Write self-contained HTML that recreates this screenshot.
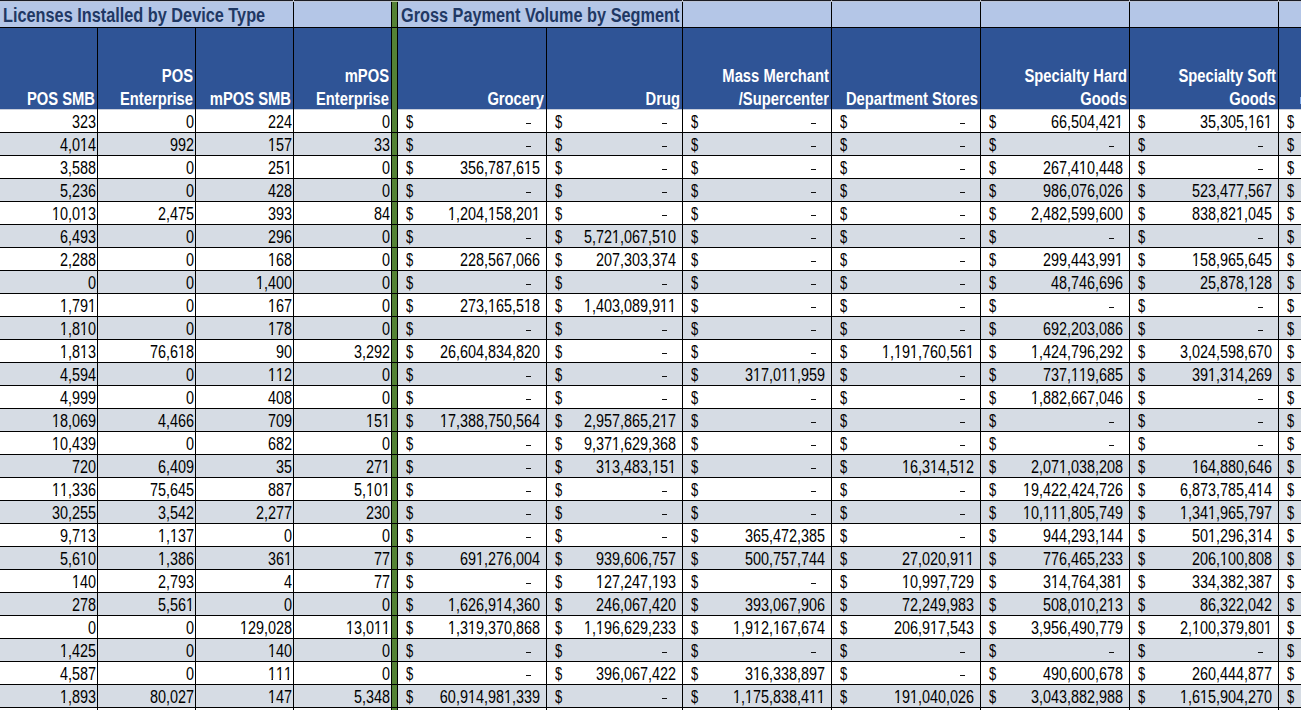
<!DOCTYPE html><html><head><meta charset="utf-8"><style>
html,body{margin:0;padding:0;}body{width:1301px;height:710px;overflow:hidden;position:relative;background:#fff;font-family:"Liberation Sans",sans-serif;}
.b{position:absolute;background:#000;}
.t{position:absolute;white-space:nowrap;line-height:24px;}
.r{text-align:right;transform-origin:100% 50%;}
.l{text-align:left;transform-origin:0 50%;}
.d{font-size:18px;transform:scaleX(0.8);color:#000;}
.h{font-size:18px;font-weight:bold;transform:scaleX(0.82);color:#fff;}
.ti{font-size:19.5px;font-weight:bold;transform:scaleX(0.835);color:#1f3864;}
.one{display:inline-block;clip-path:polygon(0 0,100% 0,100% 15.9px,6.2px 15.9px,6.2px 100%,4.4px 100%,4.4px 15.9px,0 15.9px);}
</style></head><body>
<div style="position:absolute;left:0;top:0;width:1301px;height:28px;background:#b4c6e7"></div>
<div style="position:absolute;left:0;top:28px;width:1301px;height:81px;background:#2f5496"></div>
<div style="position:absolute;left:0;top:109px;width:1301px;height:23px;background:#ffffff"></div>
<div style="position:absolute;left:0;top:132px;width:1301px;height:23px;background:#d6dce4"></div>
<div style="position:absolute;left:0;top:155px;width:1301px;height:23px;background:#ffffff"></div>
<div style="position:absolute;left:0;top:178px;width:1301px;height:23px;background:#d6dce4"></div>
<div style="position:absolute;left:0;top:201px;width:1301px;height:23px;background:#ffffff"></div>
<div style="position:absolute;left:0;top:224px;width:1301px;height:23px;background:#d6dce4"></div>
<div style="position:absolute;left:0;top:247px;width:1301px;height:23px;background:#ffffff"></div>
<div style="position:absolute;left:0;top:270px;width:1301px;height:23px;background:#d6dce4"></div>
<div style="position:absolute;left:0;top:293px;width:1301px;height:23px;background:#ffffff"></div>
<div style="position:absolute;left:0;top:316px;width:1301px;height:23px;background:#d6dce4"></div>
<div style="position:absolute;left:0;top:339px;width:1301px;height:23px;background:#ffffff"></div>
<div style="position:absolute;left:0;top:362px;width:1301px;height:23px;background:#d6dce4"></div>
<div style="position:absolute;left:0;top:385px;width:1301px;height:23px;background:#ffffff"></div>
<div style="position:absolute;left:0;top:408px;width:1301px;height:23px;background:#d6dce4"></div>
<div style="position:absolute;left:0;top:431px;width:1301px;height:23px;background:#ffffff"></div>
<div style="position:absolute;left:0;top:454px;width:1301px;height:23px;background:#d6dce4"></div>
<div style="position:absolute;left:0;top:477px;width:1301px;height:23px;background:#ffffff"></div>
<div style="position:absolute;left:0;top:500px;width:1301px;height:23px;background:#d6dce4"></div>
<div style="position:absolute;left:0;top:523px;width:1301px;height:23px;background:#ffffff"></div>
<div style="position:absolute;left:0;top:546px;width:1301px;height:23px;background:#d6dce4"></div>
<div style="position:absolute;left:0;top:569px;width:1301px;height:23px;background:#ffffff"></div>
<div style="position:absolute;left:0;top:592px;width:1301px;height:23px;background:#d6dce4"></div>
<div style="position:absolute;left:0;top:615px;width:1301px;height:23px;background:#ffffff"></div>
<div style="position:absolute;left:0;top:638px;width:1301px;height:23px;background:#d6dce4"></div>
<div style="position:absolute;left:0;top:661px;width:1301px;height:23px;background:#ffffff"></div>
<div style="position:absolute;left:0;top:684px;width:1301px;height:23px;background:#d6dce4"></div>
<div style="position:absolute;left:0;top:109px;width:1301px;height:1px;background:#c8cedb"></div>
<div style="position:absolute;left:392px;top:0;width:5px;height:710px;background:#548235"></div>
<div class="b" style="left:0;top:0;width:1301px;height:1px;background:#1a1b24"></div>
<div style="position:absolute;left:0;top:1px;width:1301px;height:1px;background:#bcc4d6"></div>
<div class="b" style="left:0;top:27px;width:1301px;height:1px"></div>
<div class="b" style="left:0;top:132px;width:1301px;height:1px"></div>
<div class="b" style="left:0;top:155px;width:1301px;height:1px"></div>
<div class="b" style="left:0;top:178px;width:1301px;height:1px"></div>
<div class="b" style="left:0;top:201px;width:1301px;height:1px"></div>
<div class="b" style="left:0;top:224px;width:1301px;height:1px"></div>
<div class="b" style="left:0;top:247px;width:1301px;height:1px"></div>
<div class="b" style="left:0;top:270px;width:1301px;height:1px"></div>
<div class="b" style="left:0;top:293px;width:1301px;height:1px"></div>
<div class="b" style="left:0;top:316px;width:1301px;height:1px"></div>
<div class="b" style="left:0;top:339px;width:1301px;height:1px"></div>
<div class="b" style="left:0;top:362px;width:1301px;height:1px"></div>
<div class="b" style="left:0;top:385px;width:1301px;height:1px"></div>
<div class="b" style="left:0;top:408px;width:1301px;height:1px"></div>
<div class="b" style="left:0;top:431px;width:1301px;height:1px"></div>
<div class="b" style="left:0;top:454px;width:1301px;height:1px"></div>
<div class="b" style="left:0;top:477px;width:1301px;height:1px"></div>
<div class="b" style="left:0;top:500px;width:1301px;height:1px"></div>
<div class="b" style="left:0;top:523px;width:1301px;height:1px"></div>
<div class="b" style="left:0;top:546px;width:1301px;height:1px"></div>
<div class="b" style="left:0;top:569px;width:1301px;height:1px"></div>
<div class="b" style="left:0;top:592px;width:1301px;height:1px"></div>
<div class="b" style="left:0;top:615px;width:1301px;height:1px"></div>
<div class="b" style="left:0;top:638px;width:1301px;height:1px"></div>
<div class="b" style="left:0;top:661px;width:1301px;height:1px"></div>
<div class="b" style="left:0;top:684px;width:1301px;height:1px"></div>
<div class="b" style="left:0;top:707px;width:1301px;height:1px"></div>
<div class="b" style="left:97px;top:28px;width:1px;height:682px"></div>
<div class="b" style="left:195px;top:28px;width:1px;height:682px"></div>
<div class="b" style="left:546px;top:28px;width:1px;height:682px"></div>
<div class="b" style="left:293px;top:2px;width:1px;height:708px"></div>
<div class="b" style="left:391px;top:2px;width:1px;height:708px"></div>
<div class="b" style="left:397px;top:2px;width:1px;height:708px"></div>
<div class="b" style="left:682px;top:2px;width:1px;height:708px"></div>
<div class="b" style="left:831px;top:2px;width:1px;height:708px"></div>
<div class="b" style="left:980px;top:2px;width:1px;height:708px"></div>
<div class="b" style="left:1129px;top:2px;width:1px;height:708px"></div>
<div class="b" style="left:1278px;top:2px;width:1px;height:708px"></div>
<div style="position:absolute;left:293px;top:0;width:1px;height:2px;background:#b8bcc4"></div>
<div style="position:absolute;left:682px;top:0;width:1px;height:2px;background:#b8bcc4"></div>
<div style="position:absolute;left:831px;top:0;width:1px;height:2px;background:#b8bcc4"></div>
<div style="position:absolute;left:980px;top:0;width:1px;height:2px;background:#b8bcc4"></div>
<div style="position:absolute;left:1129px;top:0;width:1px;height:2px;background:#b8bcc4"></div>
<div style="position:absolute;left:1278px;top:0;width:1px;height:2px;background:#b8bcc4"></div>
<div style="position:absolute;left:391px;top:0;width:7px;height:1px;background:#2a3418"></div>
<div style="position:absolute;left:391px;top:1px;width:7px;height:1px;background:#b4c49c"></div>
<div style="position:absolute;left:391px;top:708px;width:1px;height:2px;background:#000"></div>
<div style="position:absolute;left:397px;top:708px;width:1px;height:2px;background:#000"></div>
<div class="t l ti" style="left:3px;top:3px;width:300px">Licenses Installed by Device Type</div>
<div class="t l ti" style="left:401px;top:3px;width:300px">Gross Payment Volume by Segment</div>
<div class="t r h" style="left:-205px;top:87px;width:300px">POS SMB</div>
<div class="t r h" style="left:-107px;top:64px;width:300px">POS</div>
<div class="t r h" style="left:-107px;top:87px;width:300px">Enterprise</div>
<div class="t r h" style="left:-9px;top:87px;width:300px">mPOS SMB</div>
<div class="t r h" style="left:89px;top:64px;width:300px">mPOS</div>
<div class="t r h" style="left:89px;top:87px;width:300px">Enterprise</div>
<div class="t r h" style="left:244px;top:87px;width:300px">Grocery</div>
<div class="t r h" style="left:380px;top:87px;width:300px">Drug</div>
<div class="t r h" style="left:529px;top:64px;width:300px">Mass Merchant</div>
<div class="t r h" style="left:529px;top:87px;width:300px">/Supercenter</div>
<div class="t r h" style="left:678px;top:87px;width:300px">Department Stores</div>
<div class="t r h" style="left:827px;top:64px;width:300px">Specialty Hard</div>
<div class="t r h" style="left:827px;top:87px;width:300px">Goods</div>
<div class="t r h" style="left:976px;top:64px;width:300px">Specialty Soft</div>
<div class="t r h" style="left:976px;top:87px;width:300px">Goods</div>
<div class="t r d s0" style="left:-24px;top:110px;width:120px">323</div>
<div class="t r d s0" style="left:74px;top:110px;width:120px">0</div>
<div class="t r d s0" style="left:172px;top:110px;width:120px">224</div>
<div class="t r d s0" style="left:270px;top:110px;width:120px">0</div>
<div class="t l d s0" style="left:405.5px;top:110px;width:20px;transform:scaleX(0.72)">$</div>
<div style="position:absolute;left:526px;top:123px;width:5px;height:1px;background:#111"></div>
<div class="t l d s0" style="left:554.5px;top:110px;width:20px;transform:scaleX(0.72)">$</div>
<div style="position:absolute;left:662px;top:123px;width:5px;height:1px;background:#111"></div>
<div class="t l d s0" style="left:690.5px;top:110px;width:20px;transform:scaleX(0.72)">$</div>
<div style="position:absolute;left:811px;top:123px;width:5px;height:1px;background:#111"></div>
<div class="t l d s0" style="left:839.5px;top:110px;width:20px;transform:scaleX(0.72)">$</div>
<div style="position:absolute;left:960px;top:123px;width:5px;height:1px;background:#111"></div>
<div class="t l d s0" style="left:988.5px;top:110px;width:20px;transform:scaleX(0.72)">$</div>
<div class="t r d s0" style="left:983px;top:110px;width:140px">66,504,42<span class="one">1</span></div>
<div class="t l d s0" style="left:1137.5px;top:110px;width:20px;transform:scaleX(0.72)">$</div>
<div class="t r d s0" style="left:1132px;top:110px;width:140px">35,305,<span class="one">1</span>6<span class="one">1</span></div>
<div class="t l d s0" style="left:1286.5px;top:110px;width:20px;transform:scaleX(0.72)">$</div>
<div class="t r d s1" style="left:-24px;top:133px;width:120px">4,0<span class="one">1</span>4</div>
<div class="t r d s1" style="left:74px;top:133px;width:120px">992</div>
<div class="t r d s1" style="left:172px;top:133px;width:120px"><span class="one">1</span>57</div>
<div class="t r d s1" style="left:270px;top:133px;width:120px">33</div>
<div class="t l d s1" style="left:405.5px;top:133px;width:20px;transform:scaleX(0.72)">$</div>
<div style="position:absolute;left:526px;top:146px;width:5px;height:1px;background:#111"></div>
<div class="t l d s1" style="left:554.5px;top:133px;width:20px;transform:scaleX(0.72)">$</div>
<div style="position:absolute;left:662px;top:146px;width:5px;height:1px;background:#111"></div>
<div class="t l d s1" style="left:690.5px;top:133px;width:20px;transform:scaleX(0.72)">$</div>
<div style="position:absolute;left:811px;top:146px;width:5px;height:1px;background:#111"></div>
<div class="t l d s1" style="left:839.5px;top:133px;width:20px;transform:scaleX(0.72)">$</div>
<div style="position:absolute;left:960px;top:146px;width:5px;height:1px;background:#111"></div>
<div class="t l d s1" style="left:988.5px;top:133px;width:20px;transform:scaleX(0.72)">$</div>
<div style="position:absolute;left:1109px;top:146px;width:5px;height:1px;background:#111"></div>
<div class="t l d s1" style="left:1137.5px;top:133px;width:20px;transform:scaleX(0.72)">$</div>
<div style="position:absolute;left:1258px;top:146px;width:5px;height:1px;background:#111"></div>
<div class="t l d s1" style="left:1286.5px;top:133px;width:20px;transform:scaleX(0.72)">$</div>
<div class="t r d s0" style="left:-24px;top:156px;width:120px">3,588</div>
<div class="t r d s0" style="left:74px;top:156px;width:120px">0</div>
<div class="t r d s0" style="left:172px;top:156px;width:120px">25<span class="one">1</span></div>
<div class="t r d s0" style="left:270px;top:156px;width:120px">0</div>
<div class="t l d s0" style="left:405.5px;top:156px;width:20px;transform:scaleX(0.72)">$</div>
<div class="t r d s0" style="left:400px;top:156px;width:140px">356,787,6<span class="one">1</span>5</div>
<div class="t l d s0" style="left:554.5px;top:156px;width:20px;transform:scaleX(0.72)">$</div>
<div style="position:absolute;left:662px;top:169px;width:5px;height:1px;background:#111"></div>
<div class="t l d s0" style="left:690.5px;top:156px;width:20px;transform:scaleX(0.72)">$</div>
<div style="position:absolute;left:811px;top:169px;width:5px;height:1px;background:#111"></div>
<div class="t l d s0" style="left:839.5px;top:156px;width:20px;transform:scaleX(0.72)">$</div>
<div style="position:absolute;left:960px;top:169px;width:5px;height:1px;background:#111"></div>
<div class="t l d s0" style="left:988.5px;top:156px;width:20px;transform:scaleX(0.72)">$</div>
<div class="t r d s0" style="left:983px;top:156px;width:140px">267,4<span class="one">1</span>0,448</div>
<div class="t l d s0" style="left:1137.5px;top:156px;width:20px;transform:scaleX(0.72)">$</div>
<div style="position:absolute;left:1258px;top:169px;width:5px;height:1px;background:#111"></div>
<div class="t l d s0" style="left:1286.5px;top:156px;width:20px;transform:scaleX(0.72)">$</div>
<div class="t r d s1" style="left:-24px;top:179px;width:120px">5,236</div>
<div class="t r d s1" style="left:74px;top:179px;width:120px">0</div>
<div class="t r d s1" style="left:172px;top:179px;width:120px">428</div>
<div class="t r d s1" style="left:270px;top:179px;width:120px">0</div>
<div class="t l d s1" style="left:405.5px;top:179px;width:20px;transform:scaleX(0.72)">$</div>
<div style="position:absolute;left:526px;top:192px;width:5px;height:1px;background:#111"></div>
<div class="t l d s1" style="left:554.5px;top:179px;width:20px;transform:scaleX(0.72)">$</div>
<div style="position:absolute;left:662px;top:192px;width:5px;height:1px;background:#111"></div>
<div class="t l d s1" style="left:690.5px;top:179px;width:20px;transform:scaleX(0.72)">$</div>
<div style="position:absolute;left:811px;top:192px;width:5px;height:1px;background:#111"></div>
<div class="t l d s1" style="left:839.5px;top:179px;width:20px;transform:scaleX(0.72)">$</div>
<div style="position:absolute;left:960px;top:192px;width:5px;height:1px;background:#111"></div>
<div class="t l d s1" style="left:988.5px;top:179px;width:20px;transform:scaleX(0.72)">$</div>
<div class="t r d s1" style="left:983px;top:179px;width:140px">986,076,026</div>
<div class="t l d s1" style="left:1137.5px;top:179px;width:20px;transform:scaleX(0.72)">$</div>
<div class="t r d s1" style="left:1132px;top:179px;width:140px">523,477,567</div>
<div class="t l d s1" style="left:1286.5px;top:179px;width:20px;transform:scaleX(0.72)">$</div>
<div class="t r d s0" style="left:-24px;top:202px;width:120px"><span class="one">1</span>0,0<span class="one">1</span>3</div>
<div class="t r d s0" style="left:74px;top:202px;width:120px">2,475</div>
<div class="t r d s0" style="left:172px;top:202px;width:120px">393</div>
<div class="t r d s0" style="left:270px;top:202px;width:120px">84</div>
<div class="t l d s0" style="left:405.5px;top:202px;width:20px;transform:scaleX(0.72)">$</div>
<div class="t r d s0" style="left:400px;top:202px;width:140px"><span class="one">1</span>,204,<span class="one">1</span>58,20<span class="one">1</span></div>
<div class="t l d s0" style="left:554.5px;top:202px;width:20px;transform:scaleX(0.72)">$</div>
<div style="position:absolute;left:662px;top:215px;width:5px;height:1px;background:#111"></div>
<div class="t l d s0" style="left:690.5px;top:202px;width:20px;transform:scaleX(0.72)">$</div>
<div style="position:absolute;left:811px;top:215px;width:5px;height:1px;background:#111"></div>
<div class="t l d s0" style="left:839.5px;top:202px;width:20px;transform:scaleX(0.72)">$</div>
<div style="position:absolute;left:960px;top:215px;width:5px;height:1px;background:#111"></div>
<div class="t l d s0" style="left:988.5px;top:202px;width:20px;transform:scaleX(0.72)">$</div>
<div class="t r d s0" style="left:983px;top:202px;width:140px">2,482,599,600</div>
<div class="t l d s0" style="left:1137.5px;top:202px;width:20px;transform:scaleX(0.72)">$</div>
<div class="t r d s0" style="left:1132px;top:202px;width:140px">838,82<span class="one">1</span>,045</div>
<div class="t l d s0" style="left:1286.5px;top:202px;width:20px;transform:scaleX(0.72)">$</div>
<div class="t r d s1" style="left:-24px;top:225px;width:120px">6,493</div>
<div class="t r d s1" style="left:74px;top:225px;width:120px">0</div>
<div class="t r d s1" style="left:172px;top:225px;width:120px">296</div>
<div class="t r d s1" style="left:270px;top:225px;width:120px">0</div>
<div class="t l d s1" style="left:405.5px;top:225px;width:20px;transform:scaleX(0.72)">$</div>
<div style="position:absolute;left:526px;top:238px;width:5px;height:1px;background:#111"></div>
<div class="t l d s1" style="left:554.5px;top:225px;width:20px;transform:scaleX(0.72)">$</div>
<div class="t r d s1" style="left:536px;top:225px;width:140px">5,72<span class="one">1</span>,067,5<span class="one">1</span>0</div>
<div class="t l d s1" style="left:690.5px;top:225px;width:20px;transform:scaleX(0.72)">$</div>
<div style="position:absolute;left:811px;top:238px;width:5px;height:1px;background:#111"></div>
<div class="t l d s1" style="left:839.5px;top:225px;width:20px;transform:scaleX(0.72)">$</div>
<div style="position:absolute;left:960px;top:238px;width:5px;height:1px;background:#111"></div>
<div class="t l d s1" style="left:988.5px;top:225px;width:20px;transform:scaleX(0.72)">$</div>
<div style="position:absolute;left:1109px;top:238px;width:5px;height:1px;background:#111"></div>
<div class="t l d s1" style="left:1137.5px;top:225px;width:20px;transform:scaleX(0.72)">$</div>
<div style="position:absolute;left:1258px;top:238px;width:5px;height:1px;background:#111"></div>
<div class="t l d s1" style="left:1286.5px;top:225px;width:20px;transform:scaleX(0.72)">$</div>
<div class="t r d s0" style="left:-24px;top:248px;width:120px">2,288</div>
<div class="t r d s0" style="left:74px;top:248px;width:120px">0</div>
<div class="t r d s0" style="left:172px;top:248px;width:120px"><span class="one">1</span>68</div>
<div class="t r d s0" style="left:270px;top:248px;width:120px">0</div>
<div class="t l d s0" style="left:405.5px;top:248px;width:20px;transform:scaleX(0.72)">$</div>
<div class="t r d s0" style="left:400px;top:248px;width:140px">228,567,066</div>
<div class="t l d s0" style="left:554.5px;top:248px;width:20px;transform:scaleX(0.72)">$</div>
<div class="t r d s0" style="left:536px;top:248px;width:140px">207,303,374</div>
<div class="t l d s0" style="left:690.5px;top:248px;width:20px;transform:scaleX(0.72)">$</div>
<div style="position:absolute;left:811px;top:261px;width:5px;height:1px;background:#111"></div>
<div class="t l d s0" style="left:839.5px;top:248px;width:20px;transform:scaleX(0.72)">$</div>
<div style="position:absolute;left:960px;top:261px;width:5px;height:1px;background:#111"></div>
<div class="t l d s0" style="left:988.5px;top:248px;width:20px;transform:scaleX(0.72)">$</div>
<div class="t r d s0" style="left:983px;top:248px;width:140px">299,443,99<span class="one">1</span></div>
<div class="t l d s0" style="left:1137.5px;top:248px;width:20px;transform:scaleX(0.72)">$</div>
<div class="t r d s0" style="left:1132px;top:248px;width:140px"><span class="one">1</span>58,965,645</div>
<div class="t l d s0" style="left:1286.5px;top:248px;width:20px;transform:scaleX(0.72)">$</div>
<div class="t r d s1" style="left:-24px;top:271px;width:120px">0</div>
<div class="t r d s1" style="left:74px;top:271px;width:120px">0</div>
<div class="t r d s1" style="left:172px;top:271px;width:120px"><span class="one">1</span>,400</div>
<div class="t r d s1" style="left:270px;top:271px;width:120px">0</div>
<div class="t l d s1" style="left:405.5px;top:271px;width:20px;transform:scaleX(0.72)">$</div>
<div style="position:absolute;left:526px;top:284px;width:5px;height:1px;background:#111"></div>
<div class="t l d s1" style="left:554.5px;top:271px;width:20px;transform:scaleX(0.72)">$</div>
<div style="position:absolute;left:662px;top:284px;width:5px;height:1px;background:#111"></div>
<div class="t l d s1" style="left:690.5px;top:271px;width:20px;transform:scaleX(0.72)">$</div>
<div style="position:absolute;left:811px;top:284px;width:5px;height:1px;background:#111"></div>
<div class="t l d s1" style="left:839.5px;top:271px;width:20px;transform:scaleX(0.72)">$</div>
<div style="position:absolute;left:960px;top:284px;width:5px;height:1px;background:#111"></div>
<div class="t l d s1" style="left:988.5px;top:271px;width:20px;transform:scaleX(0.72)">$</div>
<div class="t r d s1" style="left:983px;top:271px;width:140px">48,746,696</div>
<div class="t l d s1" style="left:1137.5px;top:271px;width:20px;transform:scaleX(0.72)">$</div>
<div class="t r d s1" style="left:1132px;top:271px;width:140px">25,878,<span class="one">1</span>28</div>
<div class="t l d s1" style="left:1286.5px;top:271px;width:20px;transform:scaleX(0.72)">$</div>
<div class="t r d s0" style="left:-24px;top:294px;width:120px"><span class="one">1</span>,79<span class="one">1</span></div>
<div class="t r d s0" style="left:74px;top:294px;width:120px">0</div>
<div class="t r d s0" style="left:172px;top:294px;width:120px"><span class="one">1</span>67</div>
<div class="t r d s0" style="left:270px;top:294px;width:120px">0</div>
<div class="t l d s0" style="left:405.5px;top:294px;width:20px;transform:scaleX(0.72)">$</div>
<div class="t r d s0" style="left:400px;top:294px;width:140px">273,<span class="one">1</span>65,5<span class="one">1</span>8</div>
<div class="t l d s0" style="left:554.5px;top:294px;width:20px;transform:scaleX(0.72)">$</div>
<div class="t r d s0" style="left:536px;top:294px;width:140px"><span class="one">1</span>,403,089,9<span class="one">1</span><span class="one">1</span></div>
<div class="t l d s0" style="left:690.5px;top:294px;width:20px;transform:scaleX(0.72)">$</div>
<div style="position:absolute;left:811px;top:307px;width:5px;height:1px;background:#111"></div>
<div class="t l d s0" style="left:839.5px;top:294px;width:20px;transform:scaleX(0.72)">$</div>
<div style="position:absolute;left:960px;top:307px;width:5px;height:1px;background:#111"></div>
<div class="t l d s0" style="left:988.5px;top:294px;width:20px;transform:scaleX(0.72)">$</div>
<div style="position:absolute;left:1109px;top:307px;width:5px;height:1px;background:#111"></div>
<div class="t l d s0" style="left:1137.5px;top:294px;width:20px;transform:scaleX(0.72)">$</div>
<div style="position:absolute;left:1258px;top:307px;width:5px;height:1px;background:#111"></div>
<div class="t l d s0" style="left:1286.5px;top:294px;width:20px;transform:scaleX(0.72)">$</div>
<div class="t r d s1" style="left:-24px;top:317px;width:120px"><span class="one">1</span>,8<span class="one">1</span>0</div>
<div class="t r d s1" style="left:74px;top:317px;width:120px">0</div>
<div class="t r d s1" style="left:172px;top:317px;width:120px"><span class="one">1</span>78</div>
<div class="t r d s1" style="left:270px;top:317px;width:120px">0</div>
<div class="t l d s1" style="left:405.5px;top:317px;width:20px;transform:scaleX(0.72)">$</div>
<div style="position:absolute;left:526px;top:330px;width:5px;height:1px;background:#111"></div>
<div class="t l d s1" style="left:554.5px;top:317px;width:20px;transform:scaleX(0.72)">$</div>
<div style="position:absolute;left:662px;top:330px;width:5px;height:1px;background:#111"></div>
<div class="t l d s1" style="left:690.5px;top:317px;width:20px;transform:scaleX(0.72)">$</div>
<div style="position:absolute;left:811px;top:330px;width:5px;height:1px;background:#111"></div>
<div class="t l d s1" style="left:839.5px;top:317px;width:20px;transform:scaleX(0.72)">$</div>
<div style="position:absolute;left:960px;top:330px;width:5px;height:1px;background:#111"></div>
<div class="t l d s1" style="left:988.5px;top:317px;width:20px;transform:scaleX(0.72)">$</div>
<div class="t r d s1" style="left:983px;top:317px;width:140px">692,203,086</div>
<div class="t l d s1" style="left:1137.5px;top:317px;width:20px;transform:scaleX(0.72)">$</div>
<div style="position:absolute;left:1258px;top:330px;width:5px;height:1px;background:#111"></div>
<div class="t l d s1" style="left:1286.5px;top:317px;width:20px;transform:scaleX(0.72)">$</div>
<div class="t r d s0" style="left:-24px;top:340px;width:120px"><span class="one">1</span>,8<span class="one">1</span>3</div>
<div class="t r d s0" style="left:74px;top:340px;width:120px">76,6<span class="one">1</span>8</div>
<div class="t r d s0" style="left:172px;top:340px;width:120px">90</div>
<div class="t r d s0" style="left:270px;top:340px;width:120px">3,292</div>
<div class="t l d s0" style="left:405.5px;top:340px;width:20px;transform:scaleX(0.72)">$</div>
<div class="t r d s0" style="left:400px;top:340px;width:140px">26,604,834,820</div>
<div class="t l d s0" style="left:554.5px;top:340px;width:20px;transform:scaleX(0.72)">$</div>
<div style="position:absolute;left:662px;top:353px;width:5px;height:1px;background:#111"></div>
<div class="t l d s0" style="left:690.5px;top:340px;width:20px;transform:scaleX(0.72)">$</div>
<div style="position:absolute;left:811px;top:353px;width:5px;height:1px;background:#111"></div>
<div class="t l d s0" style="left:839.5px;top:340px;width:20px;transform:scaleX(0.72)">$</div>
<div class="t r d s0" style="left:834px;top:340px;width:140px"><span class="one">1</span>,<span class="one">1</span>9<span class="one">1</span>,760,56<span class="one">1</span></div>
<div class="t l d s0" style="left:988.5px;top:340px;width:20px;transform:scaleX(0.72)">$</div>
<div class="t r d s0" style="left:983px;top:340px;width:140px"><span class="one">1</span>,424,796,292</div>
<div class="t l d s0" style="left:1137.5px;top:340px;width:20px;transform:scaleX(0.72)">$</div>
<div class="t r d s0" style="left:1132px;top:340px;width:140px">3,024,598,670</div>
<div class="t l d s0" style="left:1286.5px;top:340px;width:20px;transform:scaleX(0.72)">$</div>
<div class="t r d s1" style="left:-24px;top:363px;width:120px">4,594</div>
<div class="t r d s1" style="left:74px;top:363px;width:120px">0</div>
<div class="t r d s1" style="left:172px;top:363px;width:120px"><span class="one">1</span><span class="one">1</span>2</div>
<div class="t r d s1" style="left:270px;top:363px;width:120px">0</div>
<div class="t l d s1" style="left:405.5px;top:363px;width:20px;transform:scaleX(0.72)">$</div>
<div style="position:absolute;left:526px;top:376px;width:5px;height:1px;background:#111"></div>
<div class="t l d s1" style="left:554.5px;top:363px;width:20px;transform:scaleX(0.72)">$</div>
<div style="position:absolute;left:662px;top:376px;width:5px;height:1px;background:#111"></div>
<div class="t l d s1" style="left:690.5px;top:363px;width:20px;transform:scaleX(0.72)">$</div>
<div class="t r d s1" style="left:685px;top:363px;width:140px">3<span class="one">1</span>7,0<span class="one">1</span><span class="one">1</span>,959</div>
<div class="t l d s1" style="left:839.5px;top:363px;width:20px;transform:scaleX(0.72)">$</div>
<div style="position:absolute;left:960px;top:376px;width:5px;height:1px;background:#111"></div>
<div class="t l d s1" style="left:988.5px;top:363px;width:20px;transform:scaleX(0.72)">$</div>
<div class="t r d s1" style="left:983px;top:363px;width:140px">737,<span class="one">1</span><span class="one">1</span>9,685</div>
<div class="t l d s1" style="left:1137.5px;top:363px;width:20px;transform:scaleX(0.72)">$</div>
<div class="t r d s1" style="left:1132px;top:363px;width:140px">39<span class="one">1</span>,3<span class="one">1</span>4,269</div>
<div class="t l d s1" style="left:1286.5px;top:363px;width:20px;transform:scaleX(0.72)">$</div>
<div class="t r d s0" style="left:-24px;top:386px;width:120px">4,999</div>
<div class="t r d s0" style="left:74px;top:386px;width:120px">0</div>
<div class="t r d s0" style="left:172px;top:386px;width:120px">408</div>
<div class="t r d s0" style="left:270px;top:386px;width:120px">0</div>
<div class="t l d s0" style="left:405.5px;top:386px;width:20px;transform:scaleX(0.72)">$</div>
<div style="position:absolute;left:526px;top:399px;width:5px;height:1px;background:#111"></div>
<div class="t l d s0" style="left:554.5px;top:386px;width:20px;transform:scaleX(0.72)">$</div>
<div style="position:absolute;left:662px;top:399px;width:5px;height:1px;background:#111"></div>
<div class="t l d s0" style="left:690.5px;top:386px;width:20px;transform:scaleX(0.72)">$</div>
<div style="position:absolute;left:811px;top:399px;width:5px;height:1px;background:#111"></div>
<div class="t l d s0" style="left:839.5px;top:386px;width:20px;transform:scaleX(0.72)">$</div>
<div style="position:absolute;left:960px;top:399px;width:5px;height:1px;background:#111"></div>
<div class="t l d s0" style="left:988.5px;top:386px;width:20px;transform:scaleX(0.72)">$</div>
<div class="t r d s0" style="left:983px;top:386px;width:140px"><span class="one">1</span>,882,667,046</div>
<div class="t l d s0" style="left:1137.5px;top:386px;width:20px;transform:scaleX(0.72)">$</div>
<div style="position:absolute;left:1258px;top:399px;width:5px;height:1px;background:#111"></div>
<div class="t l d s0" style="left:1286.5px;top:386px;width:20px;transform:scaleX(0.72)">$</div>
<div class="t r d s1" style="left:-24px;top:409px;width:120px"><span class="one">1</span>8,069</div>
<div class="t r d s1" style="left:74px;top:409px;width:120px">4,466</div>
<div class="t r d s1" style="left:172px;top:409px;width:120px">709</div>
<div class="t r d s1" style="left:270px;top:409px;width:120px"><span class="one">1</span>5<span class="one">1</span></div>
<div class="t l d s1" style="left:405.5px;top:409px;width:20px;transform:scaleX(0.72)">$</div>
<div class="t r d s1" style="left:400px;top:409px;width:140px"><span class="one">1</span>7,388,750,564</div>
<div class="t l d s1" style="left:554.5px;top:409px;width:20px;transform:scaleX(0.72)">$</div>
<div class="t r d s1" style="left:536px;top:409px;width:140px">2,957,865,2<span class="one">1</span>7</div>
<div class="t l d s1" style="left:690.5px;top:409px;width:20px;transform:scaleX(0.72)">$</div>
<div style="position:absolute;left:811px;top:422px;width:5px;height:1px;background:#111"></div>
<div class="t l d s1" style="left:839.5px;top:409px;width:20px;transform:scaleX(0.72)">$</div>
<div style="position:absolute;left:960px;top:422px;width:5px;height:1px;background:#111"></div>
<div class="t l d s1" style="left:988.5px;top:409px;width:20px;transform:scaleX(0.72)">$</div>
<div style="position:absolute;left:1109px;top:422px;width:5px;height:1px;background:#111"></div>
<div class="t l d s1" style="left:1137.5px;top:409px;width:20px;transform:scaleX(0.72)">$</div>
<div style="position:absolute;left:1258px;top:422px;width:5px;height:1px;background:#111"></div>
<div class="t l d s1" style="left:1286.5px;top:409px;width:20px;transform:scaleX(0.72)">$</div>
<div class="t r d s0" style="left:-24px;top:432px;width:120px"><span class="one">1</span>0,439</div>
<div class="t r d s0" style="left:74px;top:432px;width:120px">0</div>
<div class="t r d s0" style="left:172px;top:432px;width:120px">682</div>
<div class="t r d s0" style="left:270px;top:432px;width:120px">0</div>
<div class="t l d s0" style="left:405.5px;top:432px;width:20px;transform:scaleX(0.72)">$</div>
<div style="position:absolute;left:526px;top:445px;width:5px;height:1px;background:#111"></div>
<div class="t l d s0" style="left:554.5px;top:432px;width:20px;transform:scaleX(0.72)">$</div>
<div class="t r d s0" style="left:536px;top:432px;width:140px">9,37<span class="one">1</span>,629,368</div>
<div class="t l d s0" style="left:690.5px;top:432px;width:20px;transform:scaleX(0.72)">$</div>
<div style="position:absolute;left:811px;top:445px;width:5px;height:1px;background:#111"></div>
<div class="t l d s0" style="left:839.5px;top:432px;width:20px;transform:scaleX(0.72)">$</div>
<div style="position:absolute;left:960px;top:445px;width:5px;height:1px;background:#111"></div>
<div class="t l d s0" style="left:988.5px;top:432px;width:20px;transform:scaleX(0.72)">$</div>
<div style="position:absolute;left:1109px;top:445px;width:5px;height:1px;background:#111"></div>
<div class="t l d s0" style="left:1137.5px;top:432px;width:20px;transform:scaleX(0.72)">$</div>
<div style="position:absolute;left:1258px;top:445px;width:5px;height:1px;background:#111"></div>
<div class="t l d s0" style="left:1286.5px;top:432px;width:20px;transform:scaleX(0.72)">$</div>
<div class="t r d s1" style="left:-24px;top:455px;width:120px">720</div>
<div class="t r d s1" style="left:74px;top:455px;width:120px">6,409</div>
<div class="t r d s1" style="left:172px;top:455px;width:120px">35</div>
<div class="t r d s1" style="left:270px;top:455px;width:120px">27<span class="one">1</span></div>
<div class="t l d s1" style="left:405.5px;top:455px;width:20px;transform:scaleX(0.72)">$</div>
<div style="position:absolute;left:526px;top:468px;width:5px;height:1px;background:#111"></div>
<div class="t l d s1" style="left:554.5px;top:455px;width:20px;transform:scaleX(0.72)">$</div>
<div class="t r d s1" style="left:536px;top:455px;width:140px">3<span class="one">1</span>3,483,<span class="one">1</span>5<span class="one">1</span></div>
<div class="t l d s1" style="left:690.5px;top:455px;width:20px;transform:scaleX(0.72)">$</div>
<div style="position:absolute;left:811px;top:468px;width:5px;height:1px;background:#111"></div>
<div class="t l d s1" style="left:839.5px;top:455px;width:20px;transform:scaleX(0.72)">$</div>
<div class="t r d s1" style="left:834px;top:455px;width:140px"><span class="one">1</span>6,3<span class="one">1</span>4,5<span class="one">1</span>2</div>
<div class="t l d s1" style="left:988.5px;top:455px;width:20px;transform:scaleX(0.72)">$</div>
<div class="t r d s1" style="left:983px;top:455px;width:140px">2,07<span class="one">1</span>,038,208</div>
<div class="t l d s1" style="left:1137.5px;top:455px;width:20px;transform:scaleX(0.72)">$</div>
<div class="t r d s1" style="left:1132px;top:455px;width:140px"><span class="one">1</span>64,880,646</div>
<div class="t l d s1" style="left:1286.5px;top:455px;width:20px;transform:scaleX(0.72)">$</div>
<div class="t r d s0" style="left:-24px;top:478px;width:120px"><span class="one">1</span><span class="one">1</span>,336</div>
<div class="t r d s0" style="left:74px;top:478px;width:120px">75,645</div>
<div class="t r d s0" style="left:172px;top:478px;width:120px">887</div>
<div class="t r d s0" style="left:270px;top:478px;width:120px">5,<span class="one">1</span>0<span class="one">1</span></div>
<div class="t l d s0" style="left:405.5px;top:478px;width:20px;transform:scaleX(0.72)">$</div>
<div style="position:absolute;left:526px;top:491px;width:5px;height:1px;background:#111"></div>
<div class="t l d s0" style="left:554.5px;top:478px;width:20px;transform:scaleX(0.72)">$</div>
<div style="position:absolute;left:662px;top:491px;width:5px;height:1px;background:#111"></div>
<div class="t l d s0" style="left:690.5px;top:478px;width:20px;transform:scaleX(0.72)">$</div>
<div style="position:absolute;left:811px;top:491px;width:5px;height:1px;background:#111"></div>
<div class="t l d s0" style="left:839.5px;top:478px;width:20px;transform:scaleX(0.72)">$</div>
<div style="position:absolute;left:960px;top:491px;width:5px;height:1px;background:#111"></div>
<div class="t l d s0" style="left:988.5px;top:478px;width:20px;transform:scaleX(0.72)">$</div>
<div class="t r d s0" style="left:983px;top:478px;width:140px"><span class="one">1</span>9,422,424,726</div>
<div class="t l d s0" style="left:1137.5px;top:478px;width:20px;transform:scaleX(0.72)">$</div>
<div class="t r d s0" style="left:1132px;top:478px;width:140px">6,873,785,4<span class="one">1</span>4</div>
<div class="t l d s0" style="left:1286.5px;top:478px;width:20px;transform:scaleX(0.72)">$</div>
<div class="t r d s1" style="left:-24px;top:501px;width:120px">30,255</div>
<div class="t r d s1" style="left:74px;top:501px;width:120px">3,542</div>
<div class="t r d s1" style="left:172px;top:501px;width:120px">2,277</div>
<div class="t r d s1" style="left:270px;top:501px;width:120px">230</div>
<div class="t l d s1" style="left:405.5px;top:501px;width:20px;transform:scaleX(0.72)">$</div>
<div style="position:absolute;left:526px;top:514px;width:5px;height:1px;background:#111"></div>
<div class="t l d s1" style="left:554.5px;top:501px;width:20px;transform:scaleX(0.72)">$</div>
<div style="position:absolute;left:662px;top:514px;width:5px;height:1px;background:#111"></div>
<div class="t l d s1" style="left:690.5px;top:501px;width:20px;transform:scaleX(0.72)">$</div>
<div style="position:absolute;left:811px;top:514px;width:5px;height:1px;background:#111"></div>
<div class="t l d s1" style="left:839.5px;top:501px;width:20px;transform:scaleX(0.72)">$</div>
<div style="position:absolute;left:960px;top:514px;width:5px;height:1px;background:#111"></div>
<div class="t l d s1" style="left:988.5px;top:501px;width:20px;transform:scaleX(0.72)">$</div>
<div class="t r d s1" style="left:983px;top:501px;width:140px"><span class="one">1</span>0,<span class="one">1</span><span class="one">1</span><span class="one">1</span>,805,749</div>
<div class="t l d s1" style="left:1137.5px;top:501px;width:20px;transform:scaleX(0.72)">$</div>
<div class="t r d s1" style="left:1132px;top:501px;width:140px"><span class="one">1</span>,34<span class="one">1</span>,965,797</div>
<div class="t l d s1" style="left:1286.5px;top:501px;width:20px;transform:scaleX(0.72)">$</div>
<div class="t r d s0" style="left:-24px;top:524px;width:120px">9,7<span class="one">1</span>3</div>
<div class="t r d s0" style="left:74px;top:524px;width:120px"><span class="one">1</span>,<span class="one">1</span>37</div>
<div class="t r d s0" style="left:172px;top:524px;width:120px">0</div>
<div class="t r d s0" style="left:270px;top:524px;width:120px">0</div>
<div class="t l d s0" style="left:405.5px;top:524px;width:20px;transform:scaleX(0.72)">$</div>
<div style="position:absolute;left:526px;top:537px;width:5px;height:1px;background:#111"></div>
<div class="t l d s0" style="left:554.5px;top:524px;width:20px;transform:scaleX(0.72)">$</div>
<div style="position:absolute;left:662px;top:537px;width:5px;height:1px;background:#111"></div>
<div class="t l d s0" style="left:690.5px;top:524px;width:20px;transform:scaleX(0.72)">$</div>
<div class="t r d s0" style="left:685px;top:524px;width:140px">365,472,385</div>
<div class="t l d s0" style="left:839.5px;top:524px;width:20px;transform:scaleX(0.72)">$</div>
<div style="position:absolute;left:960px;top:537px;width:5px;height:1px;background:#111"></div>
<div class="t l d s0" style="left:988.5px;top:524px;width:20px;transform:scaleX(0.72)">$</div>
<div class="t r d s0" style="left:983px;top:524px;width:140px">944,293,<span class="one">1</span>44</div>
<div class="t l d s0" style="left:1137.5px;top:524px;width:20px;transform:scaleX(0.72)">$</div>
<div class="t r d s0" style="left:1132px;top:524px;width:140px">50<span class="one">1</span>,296,3<span class="one">1</span>4</div>
<div class="t l d s0" style="left:1286.5px;top:524px;width:20px;transform:scaleX(0.72)">$</div>
<div class="t r d s1" style="left:-24px;top:547px;width:120px">5,6<span class="one">1</span>0</div>
<div class="t r d s1" style="left:74px;top:547px;width:120px"><span class="one">1</span>,386</div>
<div class="t r d s1" style="left:172px;top:547px;width:120px">36<span class="one">1</span></div>
<div class="t r d s1" style="left:270px;top:547px;width:120px">77</div>
<div class="t l d s1" style="left:405.5px;top:547px;width:20px;transform:scaleX(0.72)">$</div>
<div class="t r d s1" style="left:400px;top:547px;width:140px">69<span class="one">1</span>,276,004</div>
<div class="t l d s1" style="left:554.5px;top:547px;width:20px;transform:scaleX(0.72)">$</div>
<div class="t r d s1" style="left:536px;top:547px;width:140px">939,606,757</div>
<div class="t l d s1" style="left:690.5px;top:547px;width:20px;transform:scaleX(0.72)">$</div>
<div class="t r d s1" style="left:685px;top:547px;width:140px">500,757,744</div>
<div class="t l d s1" style="left:839.5px;top:547px;width:20px;transform:scaleX(0.72)">$</div>
<div class="t r d s1" style="left:834px;top:547px;width:140px">27,020,9<span class="one">1</span><span class="one">1</span></div>
<div class="t l d s1" style="left:988.5px;top:547px;width:20px;transform:scaleX(0.72)">$</div>
<div class="t r d s1" style="left:983px;top:547px;width:140px">776,465,233</div>
<div class="t l d s1" style="left:1137.5px;top:547px;width:20px;transform:scaleX(0.72)">$</div>
<div class="t r d s1" style="left:1132px;top:547px;width:140px">206,<span class="one">1</span>00,808</div>
<div class="t l d s1" style="left:1286.5px;top:547px;width:20px;transform:scaleX(0.72)">$</div>
<div class="t r d s0" style="left:-24px;top:570px;width:120px"><span class="one">1</span>40</div>
<div class="t r d s0" style="left:74px;top:570px;width:120px">2,793</div>
<div class="t r d s0" style="left:172px;top:570px;width:120px">4</div>
<div class="t r d s0" style="left:270px;top:570px;width:120px">77</div>
<div class="t l d s0" style="left:405.5px;top:570px;width:20px;transform:scaleX(0.72)">$</div>
<div style="position:absolute;left:526px;top:583px;width:5px;height:1px;background:#111"></div>
<div class="t l d s0" style="left:554.5px;top:570px;width:20px;transform:scaleX(0.72)">$</div>
<div class="t r d s0" style="left:536px;top:570px;width:140px"><span class="one">1</span>27,247,<span class="one">1</span>93</div>
<div class="t l d s0" style="left:690.5px;top:570px;width:20px;transform:scaleX(0.72)">$</div>
<div style="position:absolute;left:811px;top:583px;width:5px;height:1px;background:#111"></div>
<div class="t l d s0" style="left:839.5px;top:570px;width:20px;transform:scaleX(0.72)">$</div>
<div class="t r d s0" style="left:834px;top:570px;width:140px"><span class="one">1</span>0,997,729</div>
<div class="t l d s0" style="left:988.5px;top:570px;width:20px;transform:scaleX(0.72)">$</div>
<div class="t r d s0" style="left:983px;top:570px;width:140px">3<span class="one">1</span>4,764,38<span class="one">1</span></div>
<div class="t l d s0" style="left:1137.5px;top:570px;width:20px;transform:scaleX(0.72)">$</div>
<div class="t r d s0" style="left:1132px;top:570px;width:140px">334,382,387</div>
<div class="t l d s0" style="left:1286.5px;top:570px;width:20px;transform:scaleX(0.72)">$</div>
<div class="t r d s1" style="left:-24px;top:593px;width:120px">278</div>
<div class="t r d s1" style="left:74px;top:593px;width:120px">5,56<span class="one">1</span></div>
<div class="t r d s1" style="left:172px;top:593px;width:120px">0</div>
<div class="t r d s1" style="left:270px;top:593px;width:120px">0</div>
<div class="t l d s1" style="left:405.5px;top:593px;width:20px;transform:scaleX(0.72)">$</div>
<div class="t r d s1" style="left:400px;top:593px;width:140px"><span class="one">1</span>,626,9<span class="one">1</span>4,360</div>
<div class="t l d s1" style="left:554.5px;top:593px;width:20px;transform:scaleX(0.72)">$</div>
<div class="t r d s1" style="left:536px;top:593px;width:140px">246,067,420</div>
<div class="t l d s1" style="left:690.5px;top:593px;width:20px;transform:scaleX(0.72)">$</div>
<div class="t r d s1" style="left:685px;top:593px;width:140px">393,067,906</div>
<div class="t l d s1" style="left:839.5px;top:593px;width:20px;transform:scaleX(0.72)">$</div>
<div class="t r d s1" style="left:834px;top:593px;width:140px">72,249,983</div>
<div class="t l d s1" style="left:988.5px;top:593px;width:20px;transform:scaleX(0.72)">$</div>
<div class="t r d s1" style="left:983px;top:593px;width:140px">508,0<span class="one">1</span>0,2<span class="one">1</span>3</div>
<div class="t l d s1" style="left:1137.5px;top:593px;width:20px;transform:scaleX(0.72)">$</div>
<div class="t r d s1" style="left:1132px;top:593px;width:140px">86,322,042</div>
<div class="t l d s1" style="left:1286.5px;top:593px;width:20px;transform:scaleX(0.72)">$</div>
<div class="t r d s0" style="left:-24px;top:616px;width:120px">0</div>
<div class="t r d s0" style="left:74px;top:616px;width:120px">0</div>
<div class="t r d s0" style="left:172px;top:616px;width:120px"><span class="one">1</span>29,028</div>
<div class="t r d s0" style="left:270px;top:616px;width:120px"><span class="one">1</span>3,0<span class="one">1</span><span class="one">1</span></div>
<div class="t l d s0" style="left:405.5px;top:616px;width:20px;transform:scaleX(0.72)">$</div>
<div class="t r d s0" style="left:400px;top:616px;width:140px"><span class="one">1</span>,3<span class="one">1</span>9,370,868</div>
<div class="t l d s0" style="left:554.5px;top:616px;width:20px;transform:scaleX(0.72)">$</div>
<div class="t r d s0" style="left:536px;top:616px;width:140px"><span class="one">1</span>,<span class="one">1</span>96,629,233</div>
<div class="t l d s0" style="left:690.5px;top:616px;width:20px;transform:scaleX(0.72)">$</div>
<div class="t r d s0" style="left:685px;top:616px;width:140px"><span class="one">1</span>,9<span class="one">1</span>2,<span class="one">1</span>67,674</div>
<div class="t l d s0" style="left:839.5px;top:616px;width:20px;transform:scaleX(0.72)">$</div>
<div class="t r d s0" style="left:834px;top:616px;width:140px">206,9<span class="one">1</span>7,543</div>
<div class="t l d s0" style="left:988.5px;top:616px;width:20px;transform:scaleX(0.72)">$</div>
<div class="t r d s0" style="left:983px;top:616px;width:140px">3,956,490,779</div>
<div class="t l d s0" style="left:1137.5px;top:616px;width:20px;transform:scaleX(0.72)">$</div>
<div class="t r d s0" style="left:1132px;top:616px;width:140px">2,<span class="one">1</span>00,379,80<span class="one">1</span></div>
<div class="t l d s0" style="left:1286.5px;top:616px;width:20px;transform:scaleX(0.72)">$</div>
<div class="t r d s1" style="left:-24px;top:639px;width:120px"><span class="one">1</span>,425</div>
<div class="t r d s1" style="left:74px;top:639px;width:120px">0</div>
<div class="t r d s1" style="left:172px;top:639px;width:120px"><span class="one">1</span>40</div>
<div class="t r d s1" style="left:270px;top:639px;width:120px">0</div>
<div class="t l d s1" style="left:405.5px;top:639px;width:20px;transform:scaleX(0.72)">$</div>
<div style="position:absolute;left:526px;top:652px;width:5px;height:1px;background:#111"></div>
<div class="t l d s1" style="left:554.5px;top:639px;width:20px;transform:scaleX(0.72)">$</div>
<div style="position:absolute;left:662px;top:652px;width:5px;height:1px;background:#111"></div>
<div class="t l d s1" style="left:690.5px;top:639px;width:20px;transform:scaleX(0.72)">$</div>
<div style="position:absolute;left:811px;top:652px;width:5px;height:1px;background:#111"></div>
<div class="t l d s1" style="left:839.5px;top:639px;width:20px;transform:scaleX(0.72)">$</div>
<div style="position:absolute;left:960px;top:652px;width:5px;height:1px;background:#111"></div>
<div class="t l d s1" style="left:988.5px;top:639px;width:20px;transform:scaleX(0.72)">$</div>
<div style="position:absolute;left:1109px;top:652px;width:5px;height:1px;background:#111"></div>
<div class="t l d s1" style="left:1137.5px;top:639px;width:20px;transform:scaleX(0.72)">$</div>
<div style="position:absolute;left:1258px;top:652px;width:5px;height:1px;background:#111"></div>
<div class="t l d s1" style="left:1286.5px;top:639px;width:20px;transform:scaleX(0.72)">$</div>
<div class="t r d s0" style="left:-24px;top:662px;width:120px">4,587</div>
<div class="t r d s0" style="left:74px;top:662px;width:120px">0</div>
<div class="t r d s0" style="left:172px;top:662px;width:120px"><span class="one">1</span><span class="one">1</span><span class="one">1</span></div>
<div class="t r d s0" style="left:270px;top:662px;width:120px">0</div>
<div class="t l d s0" style="left:405.5px;top:662px;width:20px;transform:scaleX(0.72)">$</div>
<div style="position:absolute;left:526px;top:675px;width:5px;height:1px;background:#111"></div>
<div class="t l d s0" style="left:554.5px;top:662px;width:20px;transform:scaleX(0.72)">$</div>
<div class="t r d s0" style="left:536px;top:662px;width:140px">396,067,422</div>
<div class="t l d s0" style="left:690.5px;top:662px;width:20px;transform:scaleX(0.72)">$</div>
<div class="t r d s0" style="left:685px;top:662px;width:140px">3<span class="one">1</span>6,338,897</div>
<div class="t l d s0" style="left:839.5px;top:662px;width:20px;transform:scaleX(0.72)">$</div>
<div style="position:absolute;left:960px;top:675px;width:5px;height:1px;background:#111"></div>
<div class="t l d s0" style="left:988.5px;top:662px;width:20px;transform:scaleX(0.72)">$</div>
<div class="t r d s0" style="left:983px;top:662px;width:140px">490,600,678</div>
<div class="t l d s0" style="left:1137.5px;top:662px;width:20px;transform:scaleX(0.72)">$</div>
<div class="t r d s0" style="left:1132px;top:662px;width:140px">260,444,877</div>
<div class="t l d s0" style="left:1286.5px;top:662px;width:20px;transform:scaleX(0.72)">$</div>
<div class="t r d s1" style="left:-24px;top:685px;width:120px"><span class="one">1</span>,893</div>
<div class="t r d s1" style="left:74px;top:685px;width:120px">80,027</div>
<div class="t r d s1" style="left:172px;top:685px;width:120px"><span class="one">1</span>47</div>
<div class="t r d s1" style="left:270px;top:685px;width:120px">5,348</div>
<div class="t l d s1" style="left:405.5px;top:685px;width:20px;transform:scaleX(0.72)">$</div>
<div class="t r d s1" style="left:400px;top:685px;width:140px">60,9<span class="one">1</span>4,98<span class="one">1</span>,339</div>
<div class="t l d s1" style="left:554.5px;top:685px;width:20px;transform:scaleX(0.72)">$</div>
<div style="position:absolute;left:662px;top:698px;width:5px;height:1px;background:#111"></div>
<div class="t l d s1" style="left:690.5px;top:685px;width:20px;transform:scaleX(0.72)">$</div>
<div class="t r d s1" style="left:685px;top:685px;width:140px"><span class="one">1</span>,<span class="one">1</span>75,838,4<span class="one">1</span><span class="one">1</span></div>
<div class="t l d s1" style="left:839.5px;top:685px;width:20px;transform:scaleX(0.72)">$</div>
<div class="t r d s1" style="left:834px;top:685px;width:140px"><span class="one">1</span>9<span class="one">1</span>,040,026</div>
<div class="t l d s1" style="left:988.5px;top:685px;width:20px;transform:scaleX(0.72)">$</div>
<div class="t r d s1" style="left:983px;top:685px;width:140px">3,043,882,988</div>
<div class="t l d s1" style="left:1137.5px;top:685px;width:20px;transform:scaleX(0.72)">$</div>
<div class="t r d s1" style="left:1132px;top:685px;width:140px"><span class="one">1</span>,6<span class="one">1</span>5,904,270</div>
<div class="t l d s1" style="left:1286.5px;top:685px;width:20px;transform:scaleX(0.72)">$</div>
<div style="position:absolute;left:1300px;top:97px;width:1px;height:7px;background:#7fa8e8"></div>
</body></html>
